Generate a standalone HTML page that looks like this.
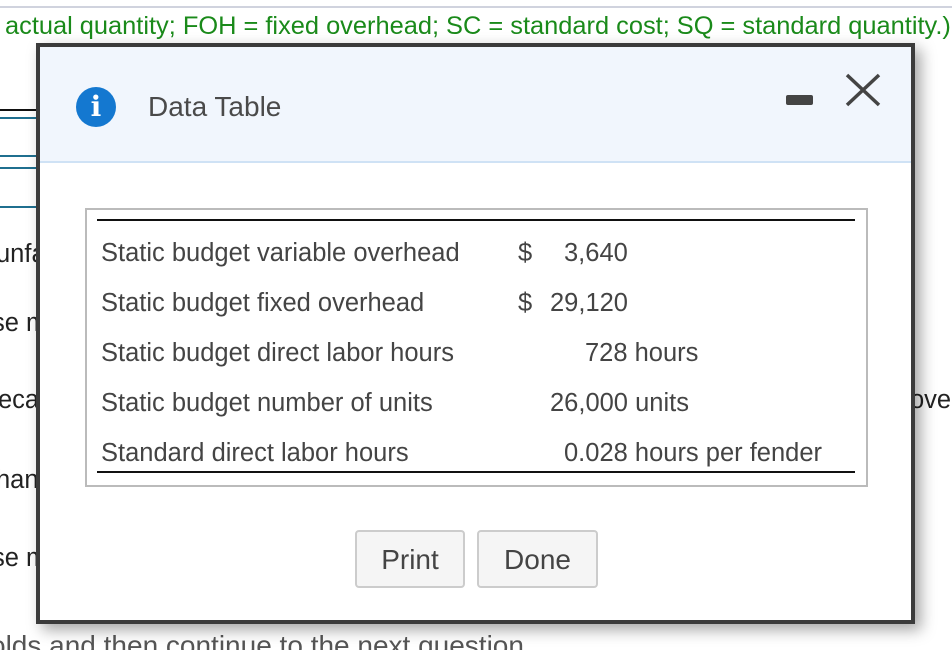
<!DOCTYPE html>
<html style="height:650px;overflow:hidden"><head><style>
html,body{margin:0;width:952px;height:650px;overflow:hidden}
body{background:#fff;font-family:"Liberation Sans",Arial,sans-serif;position:relative}
.a{position:absolute;white-space:nowrap}
.bg{font-size:25.5px;color:#222}
.hl{position:absolute;left:0;height:2px}
.m{position:absolute;left:36px;top:43px;width:871px;height:573px;border:4px solid #3b3b3b;background:#fff;box-shadow:6px 6px 14px rgba(0,0,0,.35)}
.hd{position:absolute;left:0;top:0;width:871px;height:114px;background:#f1f6fd;border-bottom:2px solid #cfe2f5}
.r{font-size:25.5px;color:#444;position:absolute}
.btn{position:absolute;top:486px;height:58px;border:2px solid #ccc;border-radius:4px;background:#f5f5f5;font-size:28px;color:#444;text-align:center;line-height:56px;box-sizing:border-box}
</style></head><body>
<div class="a" style="left:0;top:6px;width:952px;height:2px;background:#d0d3de"></div>
<div class="a" style="left:5px;top:12px;font-size:25.4px;color:#1a8a1a">actual quantity; FOH = fixed overhead; SC = standard cost; SQ = standard quantity.)</div>
<div class="hl" style="top:109px;width:40px;background:#111"></div>
<div class="hl" style="top:117px;width:40px;background:#1f6f8f"></div>
<div class="hl" style="top:155px;width:40px;background:#1f6f8f"></div>
<div class="hl" style="top:167px;width:40px;background:#1f6f8f"></div>
<div class="hl" style="top:206px;width:40px;background:#1f6f8f"></div>
<div class="a bg" style="left:-4px;top:240px">unfa</div>
<div class="a bg" style="left:-8px;top:309px">se m</div>
<div class="a bg" style="left:-2px;top:386px">eca</div>
<div class="a bg" style="left:-4px;top:466px">han</div>
<div class="a bg" style="left:-8px;top:544px">se m</div>
<div class="a bg" style="left:910px;top:386px">ove</div>
<div class="a" style="left:-10px;top:630px;height:20px;overflow:hidden;font-size:28px;line-height:32px;color:#555">olds and then continue to the next question.</div>
<div class="m">
 <div class="hd">
  <div class="a" style="left:36px;top:40px;width:40px;height:40px;border-radius:50%;background:#1478d0;color:#fff;font:bold 28px/40px 'DejaVu Serif',serif;text-align:center">i</div>
  <div class="a" style="left:108px;top:44px;font-size:28px;color:#4a4a4a">Data Table</div>
  <div class="a" style="left:746px;top:48px;width:27px;height:10px;background:#444;border-radius:2px"></div>
  <svg class="a" style="left:804px;top:26px" width="38" height="34"><path d="M3 2L35 32M35 2L3 32" stroke="#444" stroke-width="3.5"/></svg>
 </div>
 <div class="a" style="left:45px;top:161px;width:779px;height:275px;border:2px solid #bbb"></div>
 <div class="a" style="left:57px;top:172px;width:758px;height:2px;background:#111"></div>
 <div class="a" style="left:57px;top:424px;width:758px;height:2px;background:#111"></div>
 <div class="r" style="left:61px;top:192px">Static budget variable overhead</div>
 <div class="r" style="left:61px;top:242px">Static budget fixed overhead</div>
 <div class="r" style="left:61px;top:292px">Static budget direct labor hours</div>
 <div class="r" style="left:61px;top:342px">Static budget number of units</div>
 <div class="r" style="left:61px;top:392px">Standard direct labor hours</div>
 <div class="r" style="left:478px;top:192px">$</div><div class="r" style="left:524px;top:192px">3,640</div>
 <div class="r" style="left:478px;top:242px">$</div><div class="r" style="left:510px;top:242px">29,120</div>
 <div class="r" style="left:545px;top:292px">728 hours</div>
 <div class="r" style="left:510px;top:342px">26,000 units</div>
 <div class="r" style="left:524px;top:392px">0.028 hours per fender</div>
 <div class="btn" style="left:315px;width:110px;top:483px">Print</div>
 <div class="btn" style="left:437px;width:121px;top:483px">Done</div>
</div>
</body></html>
